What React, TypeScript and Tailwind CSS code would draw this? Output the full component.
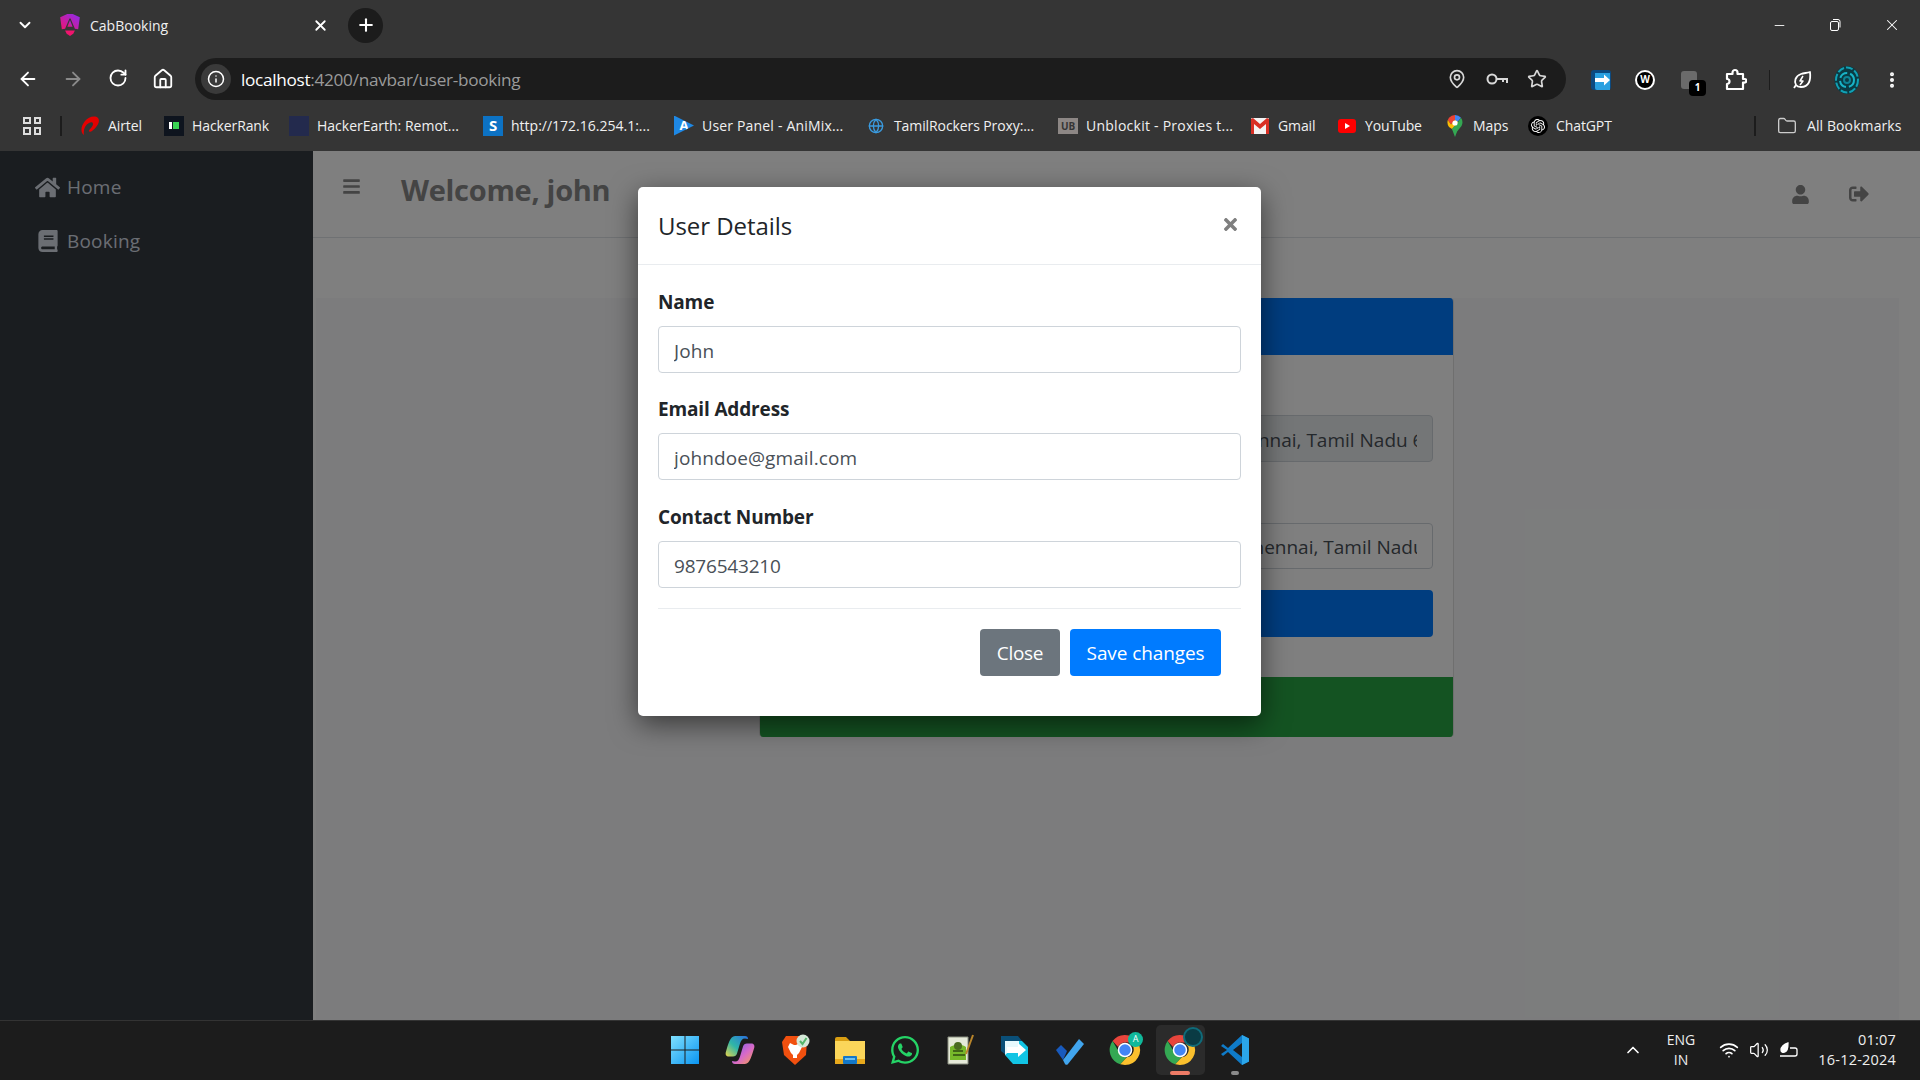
import React from 'react';
import {
  ArrowLeft, ArrowRight, RotateCw, Home, Info, ChevronDown, X, Plus, Minus, MapPin, Star,
  MoreVertical, Folder, Globe, ChevronUp, Wifi, Volume2,
} from 'lucide-react';
import { FaHome, FaBook, FaBars, FaUser, FaSignOutAlt, FaWhatsapp, FaTimes } from 'react-icons/fa';
import { SiOpenai } from 'react-icons/si';

const AngularIcon = () => (
  <svg width="22" height="24" viewBox="0 0 20 22">
    <defs>
      <linearGradient id="ng" x1="0" y1="1" x2="1" y2="0">
        <stop offset="0" stopColor="#f0146e" />
        <stop offset="1" stopColor="#8a2cf0" />
      </linearGradient>
    </defs>
    <path d="M7.500 1 1 4l1.500 11 3-.5L9.500 5h1l4 9.500 3 .5L19 4l-6.500-3Z" fill="url(#ng)" />
    <path d="M10 6.500 7.600 12.500h4.800Z" fill="url(#ng)" />
    <path d="M5.500 16h9L13 19l-3 2-3-2Z" fill="#f0146e" />
  </svg>
);

const ChromeLogo = ({ size = 32 }: { size?: number }) => (
  <svg width={size} height={size} viewBox="0 0 32 32">
    <path d="M16 1a15 15 0 0 1 13 7.500H16a7.500 7.500 0 0 0-6.900 4.600L3.600 7A15 15 0 0 1 16 1Z" fill="#e8453c" />
    <path d="M3.600 7l6.500 11.300a7.500 7.500 0 0 0 7.600 4.900L11.300 30.300A15 15 0 0 1 3.600 7Z" fill="#34a853" />
    <path d="M29 8.500A15 15 0 0 1 16 31l-4.700-.7 6.500-7.100A7.500 7.500 0 0 0 22 10Z" fill="#fbc02d" />
    <circle cx="16" cy="16" r="6.500" fill="#4285f4" stroke="#fff" strokeWidth="1.500" />
  </svg>
);

const WindowsLogo = () => (
  <svg width="30" height="30" viewBox="0 0 30 30">
    <defs>
      <linearGradient id="win" x1="0" y1="0" x2="1" y2="1">
        <stop offset="0" stopColor="#7fe0ff" />
        <stop offset="1" stopColor="#0a94f0" />
      </linearGradient>
    </defs>
    <path d="M1 1h13.500v13.500H1ZM15.500 1H29v13.500H15.500ZM1 15.500h13.500V29H1ZM15.500 15.500H29V29H15.500Z" fill="url(#win)" />
  </svg>
);

const CopilotLogo = () => (
  <svg width="32" height="32" viewBox="0 0 32 32">
    <defs>
      <linearGradient id="cp1" x1="0" y1="1" x2="1" y2="0">
        <stop offset="0" stopColor="#e8d44a" />
        <stop offset="0.45" stopColor="#2fb6a8" />
        <stop offset="1" stopColor="#2a6fe0" />
      </linearGradient>
      <linearGradient id="cp2" x1="0" y1="0" x2="1" y2="1">
        <stop offset="0" stopColor="#6f5cf0" />
        <stop offset="0.55" stopColor="#d86ac8" />
        <stop offset="1" stopColor="#f6a04d" />
      </linearGradient>
    </defs>
    <path d="M11 2h10c2 0 3 1 3 3l-3-.5c-3 0-4 2-5 5l-3 10c-.5 2-2 3-4 3H5c-3 0-4-2-3-5C4 11 6 2 11 2Z" fill="url(#cp1)" />
    <path d="M21 30H11c-2 0-3-1-3-3l3 .5c3 0 4-2 5-5l3-10c.5-2 2-3 4-3h4c3 0 4 2 3 5-2 6-4 15.500-9 15.500Z" fill="url(#cp2)" />
  </svg>
);

const BraveLogo = () => (
  <svg width="30" height="32" viewBox="0 0 30 32">
    <path d="M6 2h16l5 5-1 14-11 10L4 21 2 8Z" fill="#f1500f" />
    <path d="M10 9l4 2h2l4-2 2 4-3 6-2 2v3h-4v-3l-2-2-3-6Z" fill="#fff" />
    <circle cx="23" cy="7" r="6.500" fill="#d5e8d8" />
    <path d="M20 7l2.500 3 4-6" stroke="#56b66b" strokeWidth="2" fill="none" />
  </svg>
);

const FolderLogo = () => (
  <svg width="32" height="30" viewBox="0 0 32 30">
    <path d="M1 4a2 2 0 0 1 2-2h9l4 4H1Z" fill="#d99e12" />
    <path d="M1 6h30v22a1 1 0 0 1-1 1H2a1 1 0 0 1-1-1Z" fill="#fbd65a" />
    <path d="M1 24h30v4a1 1 0 0 1-1 1H2a1 1 0 0 1-1-1Z" fill="#e8a91c" />
    <rect x="9" y="21" width="14" height="8" rx="1" fill="#1478c8" />
    <rect x="11" y="23" width="10" height="2" fill="#6cc0f0" />
  </svg>
);

const NotepadLogo = () => (
  <svg width="30" height="32" viewBox="0 0 30 32">
    <path d="M3 3h20v27H3Z" fill="#e6ead9" stroke="#8a8f80" />
    <path d="M5 13c5-3 12-3 16 0v13H5Z" fill="#77b82a" />
    <circle cx="13" cy="12" r="4" fill="#4b6b20" />
    <path d="M8 17h10M8 21h12" stroke="#2f4a10" strokeWidth="1.500" />
    <path d="M28 1 21 20" stroke="#b9852a" strokeWidth="2" />
  </svg>
);

const DownloadLogo = ({ size = 30 }: { size?: number }) => (
  <svg width={size} height={size} viewBox="0 0 30 30">
    <path d="M1 1h17l4 5H6v14L1 16Z" fill="#0a4f78" />
    <path d="M5 6h17l6 6v17H13L5 20Z" fill="#12c4e4" />
    <path d="M5 6h14v6h-5L5 20Z" fill="#fff" opacity="0.9" />
    <path d="M7 12h11V8l8 7-8 7v-4H7Z" fill="#fff" />
  </svg>
);

const ExtensionIcon = () => (
  <svg width="22" height="22" viewBox="0 0 22 22">
    <rect x="1" y="1" width="20" height="20" rx="3" fill="#0c4a80" />
    <path d="M5 4h15v17H7a2 2 0 0 1-2-2Z" fill="#2aa0e0" />
    <path d="M5 9h9V5.500L20 11l-6 5.500V13H5Z" fill="#fff" />
  </svg>
);

const PuzzleIcon = () => (
  <svg width="22" height="24" viewBox="0 0 22 24" fill="none" stroke="#fff" strokeWidth="2.200" strokeLinejoin="round">
    <path d="M2 6h5.500V4.500a2.500 2.500 0 0 1 5 0V6H18v5h1.500a1.800 1.800 0 0 1 0 3.600H18V21H2v-5a2.500 2.500 0 0 0 0-5Z" />
  </svg>
);

const KeyIcon = () => (
  <svg width="24" height="20" viewBox="0 0 24 20" fill="none" stroke="#d8d8d8" strokeWidth="2">
    <circle cx="7" cy="10" r="4.500" />
    <path d="M11.500 10H22v4M18 10v3" />
  </svg>
);

const AvatarIcon = () => (
  <svg width="26" height="28" viewBox="0 0 26 28" fill="none">
    <ellipse cx="13" cy="14" rx="12.500" ry="14" fill="#0a3b44" />
    <ellipse cx="13" cy="14" rx="11" ry="12.500" stroke="#12a0b4" strokeWidth="2" strokeDasharray="7 2" />
    <circle cx="13" cy="14" r="7" stroke="#18b4c8" strokeWidth="2" strokeDasharray="9 3" />
    <circle cx="13" cy="14" r="3" stroke="#0e8496" strokeWidth="2" />
  </svg>
);

const TodoLogo = () => (
  <svg width="30" height="30" viewBox="0 0 30 30">
    <path d="M1 15 6 10l6 6-4 9Z" fill="#185abd" />
    <path d="M8 25 24 4l5 5-16 20a2 2 0 0 1-3 0Z" fill="#41a5ee" />
  </svg>
);

const VsCodeLogo = () => (
  <svg width="30" height="32" viewBox="0 0 30 32">
    <path d="M22 1 29 4.500v23L22 31 8 18l-5 4-2-2 6-4-6-4 2-2 5 4Z" fill="#0f7bc8" />
    <path d="M22 1 29 4.500v23L22 31Z" fill="#2ba6ea" />
    <path d="M22 9v14l-9-7Z" fill="#1c1c1c" />
  </svg>
);

const AirtelIcon = () => (
  <svg width="20" height="22" viewBox="0 0 20 22">
    <path d="M18 3C15 0 8 2 5 6 1 11 0 17 4 20c-1-5 1-10 5-12 2-1 4-1 4 1 0 3-4 5-4 7 0 1 2 1 3 0 4-3 9-9 6-13Z" fill="#e40000" />
  </svg>
);

const GmailIcon = () => (
  <svg width="18" height="16" viewBox="0 0 18 16">
    <rect width="18" height="16" rx="1" fill="#f4f4f4" />
    <path d="M0 1v15h3V6l6 5 6-5v10h3V1l-2-1-7 6L2 0Z" fill="#d93025" />
  </svg>
);

const YoutubeIcon = () => (
  <svg width="18" height="14" viewBox="0 0 18 14">
    <rect width="18" height="14" rx="3" fill="#ff0000" />
    <path d="M7 4l5 3-5 3Z" fill="#fff" />
  </svg>
);

const MapsIcon = () => (
  <svg width="16" height="22" viewBox="0 0 16 22">
    <path d="M8 0a8 8 0 0 1 6 2.800L8 10Z" fill="#4285f4" />
    <path d="M2 2.800A8 8 0 0 1 8 0v5L4 9.500 0.800 5Z" fill="#ea4335" />
    <path d="M14 2.800A8 8 0 0 1 14.500 11L8 19 5 14l6-7Z" fill="#34a853" />
    <path d="M0.800 5 4 9.500 8 5 11 7 5 14 2 12A8 8 0 0 1 0.800 5Z" fill="#fbbc04" />
    <path d="M8 22l-3-8 3-3 3 3Z" fill="#34a853" />
    <circle cx="8" cy="8" r="2.600" fill="#fff" />
  </svg>
);

const Leaf = () => (
  <svg width="20" height="20" viewBox="0 0 20 20" fill="none" stroke="#fff" strokeWidth="1.800" strokeLinejoin="round">
    <path d="M18 2c1 8-1 15-9 15-2 0-4-.5-5-2C2 12 3 6 9 4c3-1 6-1 9-2Z" />
    <path d="M11 6 8 11h3l-3 4" strokeWidth="1.500" />
    <path d="M4 15l-2 3" />
  </svg>
);

const bookmarks: { icon: React.ReactNode; label: string; width: number; spacing?: string }[] = [
  { icon: <AirtelIcon />, label: 'Airtel', width: 84 },
  {
    icon: (
      <span className="flex h-5 w-5 items-center justify-center bg-[#0e141e]">
        <span className="h-[7px] w-[3px] bg-[#fff]" />
        <span className="ml-[1px] h-[7px] w-[6px] bg-[#39d353]" />
      </span>
    ),
    label: 'HackerRank',
    width: 125,
  },
  { icon: <span className="block h-5 w-5 bg-[#232a4d]" />, label: 'HackerEarth: Remot...', width: 194, spacing: 'tracking-[0px]' },
  {
    icon: (
      <span className="flex h-5 w-5 items-center justify-center bg-[#0c72c4] text-[15px] font-bold leading-none text-white">S</span>
    ),
    label: 'http://172.16.254.1:...',
    width: 191,
    spacing: 'tracking-[0px]',
  },
  {
    icon: (
      <span className="flex h-5 w-5 items-center justify-center bg-[#1e88e5] text-[13px] font-bold leading-none text-white [clip-path:polygon(0_0,100%_50%,0_100%)]">A</span>
    ),
    label: 'User Panel - AniMix...',
    width: 192,
    spacing: 'tracking-[0.18px]',
  },
  { icon: <Globe size={16} color="#3a9be0" />, label: 'TamilRockers Proxy:...', width: 192 },
  {
    icon: <span className="flex h-4 w-5 items-center justify-center bg-[#8d8785] text-[10px] font-bold leading-none text-[#353535]">UB</span>,
    label: 'Unblockit - Proxies t...',
    width: 192,
    spacing: 'tracking-[0.25px]',
  },
  { icon: <GmailIcon />, label: 'Gmail', width: 87 },
  { icon: <YoutubeIcon />, label: 'YouTube', width: 108 },
  { icon: <MapsIcon />, label: 'Maps', width: 83 },
  {
    icon: (
      <span className="flex h-5 w-5 items-center justify-center rounded-full bg-black text-white">
        <SiOpenai size={14} />
      </span>
    ),
    label: 'ChatGPT',
    width: 90,
  },
];

const ChromeBar = () => (
  <div className="flex h-[151px] shrink-0 flex-col bg-[#353535] text-white">
    <div className="flex h-[50px] items-center">
      <div className="flex w-[50px] justify-center">
        <ChevronDown size={18} strokeWidth={2.500} />
      </div>
      <div className="ml-[9px] flex w-[271px] items-center">
        <AngularIcon />
        <span className="ml-[9px] text-[14px] text-[#f0f0f0]">CabBooking</span>
      </div>
      <X size={17} strokeWidth={2.500} className="-ml-[18px]" />
      <div className="ml-[19px] flex h-[35px] w-[35px] items-center justify-center rounded-full bg-[#1c1c1c]">
        <Plus size={20} strokeWidth={2.500} />
      </div>
      <div className="ml-auto flex items-center gap-[41px] pr-[19px] text-white">
        <Minus size={15} strokeWidth={1.400} />
        <svg width="14" height="14" viewBox="0 0 14 14" fill="none" stroke="#fff">
          <rect x="2.500" y="3.500" width="8" height="9" rx="1.500" />
          <path d="M5 1.500h5a2 2 0 0 1 2 2v6" />
        </svg>
        <X size={18} strokeWidth={1.400} />
      </div>
    </div>
    <div className="flex h-[58px] items-center">
      <div className="flex pl-[5px]">
        <div className="flex w-[45px] justify-center"><ArrowLeft size={22} strokeWidth={2} /></div>
        <div className="flex w-[45px] justify-center"><ArrowRight size={22} strokeWidth={2} color="#8a8a8a" /></div>
        <div className="flex w-[45px] justify-center"><RotateCw size={20} strokeWidth={2.200} /></div>
        <div className="flex w-[45px] justify-center"><Home size={22} strokeWidth={2} /></div>
      </div>
      <div className="ml-[10px] flex h-[42px] w-[1371px] items-center rounded-full bg-[#1c1c1c] pl-[6px] pr-[19px]">
        <div className="flex h-[30px] w-[30px] items-center justify-center rounded-full bg-[#3a3a3a]">
          <Info size={18} strokeWidth={2} />
        </div>
        <span className="ml-[10px] pt-[2px] text-[17.200px] tracking-[-0.3px] text-white">
          localhost<span className="text-[#9a9a9a]">:4200/navbar/user-booking</span>
        </span>
        <div className="ml-auto flex items-center gap-[18px] text-[#d8d8d8]">
          <MapPin size={20} strokeWidth={2} />
          <KeyIcon />
          <Star size={20} strokeWidth={2} />
        </div>
      </div>
      <div className="ml-[24px] flex items-center pt-[1px]">
        <ExtensionIcon />
        <div className="ml-[23px] flex h-[20px] w-[20px] items-center justify-center rounded-full border-2 border-white bg-black text-[10px] font-bold">W</div>
        <div className="relative ml-[26px]">
          <div className="h-[18px] w-[16px] rounded-[3px] bg-[#6b6b6b]" />
          <span className="absolute left-[8px] top-[9px] flex h-[16px] w-[17px] items-center justify-center rounded-[4px] bg-black text-[10px] font-bold">1</span>
        </div>
        <div className="ml-[28px]"><PuzzleIcon /></div>
        <div className="ml-[22px] h-[20px] w-[1px] bg-[#1c1c1c]" />
        <div className="ml-[22px]"><Leaf /></div>
        <div className="ml-[22px]"><AvatarIcon /></div>
        <MoreVertical size={20} strokeWidth={2.800} className="ml-[22px]" />
      </div>
    </div>
    <div className="flex h-[43px] items-center pb-[8px] text-[14px] tracking-[-0.1px]">
      <div className="ml-[23px] grid h-[18px] w-[18px] grid-cols-2 gap-[3px]">
        <span className="border-2 border-[#ddd]" />
        <span className="border-2 border-[#ddd]" />
        <span className="border-2 border-[#ddd]" />
        <span className="border-2 border-[#ddd]" />
      </div>
      <div className="ml-[19px] h-[20px] w-[2px] bg-[#1c1c1c]" />
      <div className="ml-[18px] flex">
        {bookmarks.map((b) => (
          <div key={b.label} className="flex items-center" style={{ width: b.width }}>
            <div className="flex w-[20px] justify-center">{b.icon}</div>
            <span className={`ml-[8px] whitespace-nowrap text-[#f0f0f0] ${b.spacing ?? ''}`}>{b.label}</span>
          </div>
        ))}
      </div>
      <div className="ml-[136px] h-[20px] w-[2px] bg-[#1c1c1c]" />
      <Folder size={20} strokeWidth={1.600} className="ml-[21px]" color="#ccc" />
      <span className="ml-[10px] whitespace-nowrap tracking-[0.1px] text-[#f0f0f0]">All Bookmarks</span>
    </div>
  </div>
);

const Sidebar = () => (
  <div className="w-[313px] shrink-0 bg-[#343a40] pt-[9px] text-[#d6dce6]">
    <div className="flex h-[54px] items-center pl-[35px]">
      <div className="flex w-[32px]"><FaHome size={25} /></div>
      <span className="text-[19px] tracking-[0.2px]">Home</span>
    </div>
    <div className="flex h-[54px] items-center pl-[37px]">
      <div className="flex w-[30px]"><FaBook size={22} /></div>
      <span className="text-[19px] tracking-[0.2px]">Booking</span>
    </div>
  </div>
);

const BookingCard = () => (
  <div className="mr-[2px] flex w-[695px] flex-col self-start overflow-hidden rounded-[4px] border-x border-[#dfdfdf] bg-white">
    <div className="h-[57px] bg-[#007bff]" />
    <div className="flex h-[322px] flex-col px-[20px] pt-[60px]">
      <input
        readOnly
        value="Chennai International Airport, Meenambakkam, Chennai, Tamil Nadu 600016"
        className="h-[47px] w-full rounded-[4px] border border-[#ced4da] bg-[#e9ecef] px-[15px] pt-[2px] text-[19px] text-[#495057]"
      />
      <input
        readOnly
        value="Anna Nagar Tower Park Gate 2, Anna Nagar West, Chennai, Tamil Nadu 600040"
        className="mt-[61px] h-[46px] w-full rounded-[4px] border border-[#ced4da] bg-white px-[15px] pt-[2px] text-[19px] text-[#495057]"
      />
      <div className="mt-[21px] h-[47px] rounded-[4px] bg-[#007bff]" />
    </div>
    <div className="h-[60px] bg-[#28a745]" />
  </div>
);

const Field = ({ label, value, className, valueClass }: { label: string; value: string; className: string; valueClass: string }) => (
  <div className={className}>
    <label className="block h-[36px] text-[19px] font-bold leading-[24px] tracking-[-0.15px] text-[#212529]">{label}</label>
    <input
      readOnly
      value={value}
      className={`h-[47px] w-full rounded-[4px] border border-[#ced4da] bg-white px-[15px] pt-[2px] text-[19px] text-[#495057] ${valueClass}`}
    />
  </div>
);

const UserModal = () => (
  <div className="absolute inset-0 z-10 flex justify-center bg-black/50 pr-[21px] pt-[36px]">
    <div className="h-[529px] w-[623px] rounded-[5px] bg-white shadow-[0_8px_28px_rgba(0,0,0,0.55)]">
      <div className="flex h-[78px] items-center justify-between border-b border-[#e9ecef] pl-[20px] pr-[21px]">
        <h5 className="text-[24px] font-medium tracking-[-0.05px] text-[#212529]">User Details</h5>
        <FaTimes size={19} color="#7f7f7f" className="-mt-[3px]" />
      </div>
      <div className="px-[20px] pt-[25px]">
        <Field label="Name" value="John" className="" valueClass="tracking-[0.1px]" />
        <Field label="Email Address" value="johndoe@gmail.com" className="mt-[24px]" valueClass="tracking-[0.1px]" />
        <Field label="Contact Number" value="9876543210" className="mt-[25px]" valueClass="tracking-[-0.2px]" />
        <div className="mt-[20px] flex justify-end gap-[10px] border-t border-[#e9ecef] pr-[20px] pt-[20px]">
          <button className="h-[47px] w-[80px] rounded-[4px] bg-[#6c757d] pt-[2px] text-[19px] tracking-[-0.3px] text-white">Close</button>
          <button className="h-[47px] w-[151px] rounded-[4px] bg-[#007bff] pt-[2px] text-[19px] tracking-[-0.1px] text-white">Save changes</button>
        </div>
      </div>
    </div>
  </div>
);

const MainArea = () => (
  <div className="flex min-w-0 flex-1 flex-col bg-white">
    <div className="flex h-[87px] shrink-0 items-center border-b border-[#dee2e6] pl-[29px] pr-[51px] text-[#888]">
      <FaBars size={19} className="-mt-[16px]" />
      <h3 className="ml-[40px] -mt-[8px] text-[29px] font-bold tracking-[-0.3px]">Welcome, john</h3>
      <div className="ml-auto flex items-center gap-[39px]">
        <FaUser size={19} />
        <FaSignOutAlt size={20} />
      </div>
    </div>
    <div className="ml-[3px] mr-[21px] mt-[60px] flex flex-1 justify-center bg-[#f8f9fa]">
      <BookingCard />
    </div>
  </div>
);

const taskbarIcons: React.ReactNode[] = [
  <WindowsLogo />,
  <CopilotLogo />,
  <BraveLogo />,
  <FolderLogo />,
  <FaWhatsapp size={32} color="#25d366" />,
  <NotepadLogo />,
  <DownloadLogo />,
  <TodoLogo />,
  <div className="relative">
    <ChromeLogo />
    <span className="absolute -right-[2px] -top-[2px] flex h-[15px] w-[15px] items-center justify-center rounded-full bg-[#10b99b] text-[9px] text-white">A</span>
  </div>,
  <div className="relative">
    <ChromeLogo />
    <span className="absolute -right-[7px] -top-[7px] h-[20px] w-[20px] rounded-full border-2 border-[#0f6b7a] bg-[#0a3b44]" />
  </div>,
  <VsCodeLogo />,
];

const Taskbar = () => (
  <div className="relative flex h-[60px] shrink-0 items-center justify-center border-t border-[#333] bg-[#1c1c1c] pb-[2px] text-white">
    <div className="flex">
      {taskbarIcons.map((icon, i) => (
        <div key={i} className="flex w-[55px] justify-center">
          <div className={`relative flex h-[50px] w-[49px] items-center justify-center rounded-[5px] ${i === 9 ? 'bg-[#2b2b2b]' : ''}`}>
            {icon}
            {i === 9 && <span className="absolute bottom-0 h-[4px] w-[20px] rounded-full bg-[#ee7b66]" />}
            {i === 10 && <span className="absolute bottom-0 h-[4px] w-[8px] rounded-full bg-[#8a8a8a]" />}
          </div>
        </div>
      ))}
    </div>
    <div className="absolute right-[24px] flex items-center text-[14px] leading-[20px]">
      <ChevronUp size={20} strokeWidth={2} />
      <div className="ml-[13px] flex w-[50px] flex-col items-center text-[#eee]">
        <span>ENG</span>
        <span>IN</span>
      </div>
      <Wifi size={20} strokeWidth={2} className="ml-[13px]" />
      <Volume2 size={20} strokeWidth={1.500} className="ml-[10px]" />
      <svg width="20" height="18" viewBox="0 0 20 18" fill="none" stroke="#fff" strokeWidth="1.300" className="ml-[10px]">
        <path d="M1 15h15a2 2 0 0 0 2-2V9a2 2 0 0 0-2-2h-5" />
        <path d="M9 2C5 3 2 6 2 9c0 2 2 3 4 2 3-1 3-6 3-9Z" fill="#fff" />
      </svg>
      <div className="ml-[19px] flex w-[78px] flex-col items-end text-[14.500px] tracking-[0.2px] text-[#eee]">
        <span>01:07</span>
        <span className="whitespace-nowrap">16-12-2024</span>
      </div>
    </div>
  </div>
);

export default function App() {
  return (
    <div className="flex h-screen w-screen flex-col overflow-hidden font-['Open_Sans',sans-serif]">
      <ChromeBar />
      <div className="relative flex min-h-0 flex-1">
        <Sidebar />
        <MainArea />
        <UserModal />
      </div>
      <Taskbar />
    </div>
  );
}
